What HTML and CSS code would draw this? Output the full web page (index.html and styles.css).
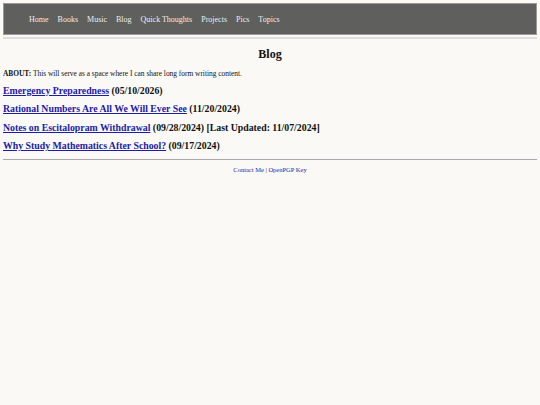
FILE: index.html
```html
<!DOCTYPE html>
<html>
<head>
<meta charset="utf-8">
<link rel="stylesheet" href="styles.css">
</head>
<body>
<nav class="nav">
  <ul class="nav-list">
    <li><a href="#">Home</a></li>
    <li><a href="#">Books</a></li>
    <li><a href="#">Music</a></li>
    <li><a href="#">Blog</a></li>
    <li><a href="#">Quick Thoughts</a></li>
    <li><a href="#">Projects</a></li>
    <li><a href="#">Pics</a></li>
    <li><a href="#">Topics</a></li>
  </ul>
</nav>
<div class="nav-rule"></div>
<main class="content">
  <h1 class="title">Blog</h1>
  <p class="about"><b>ABOUT:</b> This will serve as a space where I can share long form writing content.</p>
  <p class="post"><a href="#">Emergency Preparedness</a> (05/10/2026)</p>
  <p class="post"><a href="#">Rational Numbers Are All We Will Ever See</a> (11/20/2024)</p>
  <p class="post"><a href="#">Notes on Escitalopram Withdrawal</a> (09/28/2024) [Last Updated: 11/07/2024]</p>
  <p class="post"><a href="#">Why Study Mathematics After School?</a> (09/17/2024)</p>
</main>
<hr class="foot-rule">
<footer class="footer"><a href="#">Contact Me</a> | <a href="#">OpenPGP Key</a></footer>
</body>
</html>
```
FILE: styles.css
```css
html, body {
  background: #faf9f6;
}
body {
  margin: 3px;
  font-family: "Liberation Serif", serif;
  color: #111;
}
.nav {
  background: #5f5f5d;
  border: 1px solid #9a9a98;
  height: 30px;
  display: flex;
  align-items: center;
}
.nav-list {
  list-style: none;
  margin: 0;
  padding: 0 0 0 25px;
  display: flex;
  gap: 9px;
  font-size: 8px;
}
.nav-list a {
  color: #eeeeee;
  text-decoration: none;
}
.nav-rule {
  margin-top: 2px;
  height: 2px;
  background: #dddddb;
}
.title {
  text-align: center;
  font-size: 12px;
  margin: 8px 0 7px;
}
.about {
  font-size: 7.4px;
  margin: 0 0 7px;
}
.post {
  font-size: 9.8px;
  font-weight: bold;
  margin: 0 0 7.3px;
}
.post a {
  color: #1c1caa;
}
.foot-rule {
  border: 0;
  border-top: 1px solid #aaa;
  margin: 8px 0 6px;
}
.footer {
  text-align: center;
  font-size: 6.5px;
}
.footer a {
  color: #1c1caa;
}
```
